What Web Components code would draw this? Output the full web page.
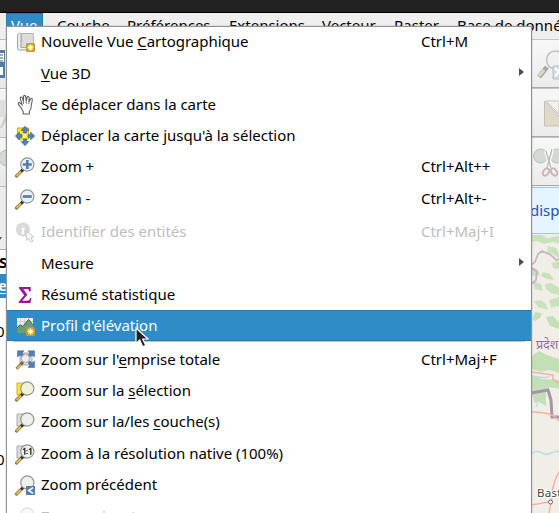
<!DOCTYPE html>
<html lang="fr"><head><meta charset="utf-8"><title>QGIS</title>
<style>
html,body{margin:0;width:559px;height:513px;overflow:hidden;background:#fff}
body{font:15px "Noto Sans",sans-serif;color:#000}
</style></head><body>
<qg-window>
 <menu-bar slot="bar"></menu-bar>
 <layer-panel slot="left"></layer-panel>
 <tool-stack slot="right"></tool-stack>
 <drop-menu slot="menu">
  <menu-row icon="newmap" key="Ctrl+M">Nouvelle Vue <u>C</u>artographique</menu-row>
  <menu-row gap="1" sub><u>V</u>ue 3D</menu-row>
  <menu-row icon="hand">Se déplacer dans la carte</menu-row>
  <menu-row icon="pan">Déplacer la carte jusqu'à la sélection</menu-row>
  <menu-row icon="zin" key="Ctrl+Alt++">Zoom +</menu-row>
  <menu-row gap="1" icon="zout" key="Ctrl+Alt+-">Zoom -</menu-row>
  <menu-row gap="2" icon="info" key="Ctrl+Maj+I" disabled>Identifier des entités</menu-row>
  <menu-row gap="1" sub>Mesure</menu-row>
  <menu-row icon="sigma">Résumé statistique</menu-row>
  <menu-row icon="profile" active>Profil d'élévation</menu-row>
  <menu-row gap="3" line icon="full" key="Ctrl+Maj+F">Zoom sur l'<u>e</u>mprise totale</menu-row>
  <menu-row icon="zsel">Zoom sur la <u>s</u>élection</menu-row>
  <menu-row icon="zlay">Zoom sur la/les <u>c</u>ouche(s)</menu-row>
  <menu-row gap="1" icon="znat">Zoom à la résolution native (100%)</menu-row>
  <menu-row icon="zprev">Zoom précédent</menu-row>
  <menu-row gap="1" icon="znext" disabled>Zoom suivant</menu-row>
 </drop-menu>
 <mouse-pointer slot="pointer"></mouse-pointer>
</qg-window>
<script>
const lens=(fill='#f0f2ee',inner='')=>`<path d="M8.4 12.2 1.5 19" stroke="#77705f" stroke-width="3.2" stroke-linecap="round"/><path d="M5.8 14.8 2 18.5" stroke="#e5bd4c" stroke-width="1.9" stroke-linecap="round"/><path d="m8.6 12-2.5 2.5" stroke="#333" stroke-width="2.8"/><circle cx="12.3" cy="7.5" r="6.6" fill="${fill}" stroke="#8f9496" stroke-width="1.2"/>${inner}`;
const badge='<rect x="11" y="11" width="9" height="9" rx="1.6" fill="#c6a110"/><path d="M15.5 12.3v6.4M12.5 15.5h6M13.4 13.4l4.2 4.2M17.6 13.4l-4.2 4.2" stroke="#fff5bd" stroke-width="1.3"/><circle cx="15.5" cy="15.5" r="1.2" fill="#fff"/>';
const ICONS={
newmap:`<path d="M6 1.5h12.5v15H6z" fill="#dcdcda" stroke="#b4b4b2"/><path d="M2.5 2.5Q4.3-.5 6 2.5v13h13v2.6H4.4q-1.9-.2-1.9-2z" fill="#ececea" stroke="#a4a4a4"/>${badge}`,
hand:`<path d="M5.2 12.8 3 9.9C2 8.5 3.5 7.4 4.8 8.6l1.8 1.7L4.8 4.1c-.5-1.7 1.5-2.2 2.1-.7L8 7.1V2.2C8 .5 10 .5 10.2 2.1l.6 4.800.8-4c.3-1.400 2.200-1.100 2.100.5l-.3 4 1.500-2.700c.8-1.300 2.200-.6 1.900.8l-1 5.200c0 3.900-1 5.100-2 6.100v2.700H7.700v-2.400z" fill="#fff" stroke="#606060" stroke-width="1.100" transform="matrix(1 0 0 1 .5 -.5)"/><path d="M8.500 6.500v2.300M11.300 6.500v2.300M13.900 7v2" stroke="#777"/>`,
pan:`<path d="M2.5 2h11v11h-11z" fill="#ffe72e" stroke="#c7ac13"/><g fill="#547fae" stroke="#385f8b" stroke-width=".6"><path d="M10 .3 14 4.5h-2.5V7h-3V4.5H6zM10 19.7l4-4.200h-2.500V13h-3v2.500H6zM.3 10l4.200-4v2.500H7v3H4.500V14zM19.700 10l-4.200-4v2.500H13v3h2.500V14z"/></g><path d="M8 8h4v4H8z" fill="#fff284"/>`,
zin:lens('#eef1f2','<path d="M12.3 3v9M7.8 7.5h9" stroke="#557fae" stroke-width="2.7"/>'),
zout:lens('#eef1f2','<path d="M7.8 7.5h9" stroke="#557fae" stroke-width="2.7"/>'),
info:`<circle cx="8" cy="7.5" r="7" fill="#d7d9db"/><path d="M8.8 3.2h.2M6.5 6.8h2l-1 4.5h1.8" stroke="#fff" stroke-width="2"/><path d="m11 9 .8 9.300 2.300-2 2 3.700 1.800-1-2-3.600 3.100-.5z" fill="#fff" stroke="#c2c4c6"/>`,
sigma:`<path d="M4 2h11.700v4.500h-1.500c-.3-2-.9-2.500-2.700-2.500H8.300l4 5.700-5 6h4.600c2 0 2.900-.8 3.300-2.700h1.100l-.8 5H3.700v-1.300l5.500-6.400L4 3.200z" fill="#9b159b"/>`,
profile:`<path d="M2 2h16v15H2z" fill="#e8eceb"/><path d="M5.5 2v12M9.5 2v12M13.5 2v12M2 5.5h16M2 9h16" stroke="#c0cdc9" stroke-width=".7"/><path d="M2 12 5 9l3 1.500L12 5l1.800-1.500L18 9v8H2z" fill="#6c9b80"/><path d="M2 12 5 9l3 1.500L12 5l1.800-1.500L18 9" stroke="#3d7056" fill="none"/>${badge}`,
full:`<path d="M5 3h12v12H5z" fill="#dadddd" stroke="#aaa"/><g fill="#547fae" stroke="#3d668f" stroke-width=".5"><path d="M2.500.8h6.500L7.200 3l1.800 2-2 2-2-2-2.500 2zM19.500.8H13L14.800 3 13 5l2 2 2-2 2.500 2zM19.500 17.500H13l1.800-2.300L13 13l2-2 2 2 2.500-2z"/></g><path d="m8.200 11.800-6.600 7" stroke="#706852" stroke-width="3"/><path d="m5.700 14.800-3.500 3.600" stroke="#e4bc4a" stroke-width="2"/><circle cx="10.500" cy="8.500" r="4" fill="#edf0ec" stroke="#aaa"/>`,
zsel:`<path d="M2 2h9v12H2z" fill="#ffe72e" stroke="#c8b224"/>${lens('#f3f0d8')}`,
zlay:`<path d="M2 2h9v12H2z" fill="#ddd" stroke="#aaa"/>${lens('#eef0e9')}`,
znat:`<path d="M2 2h9v12H2z" fill="#ddd" stroke="#aaa"/>${lens('#f0f1ef','<path d="m8 5.700 1.800-1v6M14 5.700l1.800-1v6M12 6.200v1M12 9v1" stroke="#333" stroke-width="1.400"/>')}`,
zprev:lens('#eef0e9','<path d="M11 11h9v9h-9z" fill="#547fae"/><path d="m18 12.600-4.400 2.900 4.400 2.900" stroke="#fff" stroke-width="1.500"/>'),
znext:lens('#eef0e9')
};
function el(name,css,html){customElements.define(name,class extends HTMLElement{constructor(){super();this.attachShadow({mode:'open'}).innerHTML=`<style>*{box-sizing:border-box}${css}</style>${html}`}})}

el('qg-window',`:host{display:grid;position:relative;width:559px;height:513px;grid-template-rows:13px 26px 474px;overflow:hidden}
.title{background:#222;border-bottom:1px solid #000}.work{display:grid;grid-template-columns:1fr 28px}
.over{position:absolute;left:6px;top:26px}.ptr{position:absolute;left:135px;top:327px}`,
`<div class="title"></div><slot name="bar"></slot><div class="work"><slot name="left"></slot><slot name="right"></slot></div><div class="over"><slot name="menu"></slot></div><div class="ptr"><slot name="pointer"></slot></div>`);

el('menu-bar',`:host{display:grid;grid-template-columns:51px 70px 102px 93px 72px 63px 110px;padding-left:6px;background:#efefef;line-height:25px;height:26px;white-space:nowrap;overflow:hidden}
.on{background:#308cc6;color:#fff;width:37px;border:1px solid #2a79ab;border-width:1px 1px 0;line-height:23px;padding-left:4px}`,
`<span class="on">Vue</span><span>Couche</span><span>Préférences</span><span>Extensions</span><span>Vecteur</span><span>Raster</span><span>Base de données</span>`);

el('layer-panel',`:host{display:flex;flex-direction:column;width:7px;overflow:hidden;background:#fff}
div{flex:none;overflow:hidden;white-space:nowrap}.t{height:49px;background:linear-gradient(#f6f6f6,#e8e8e8);border-top:1px solid #bbb}
.t svg{display:block}.dock{height:64px;background:#ececec;border-bottom:1px solid #aaa;border-top:1px solid #bbb}.s{height:24px;line-height:24px;font-weight:700}.e{height:24px;line-height:22px;background:#308cc6;color:#fff;text-decoration:underline;text-underline-offset:2px;font-weight:700}
.n{height:128px;line-height:66px}.n span,.s span,.e span{display:block;margin-left:-4px}.s span{margin-left:-1px}.e span{margin-left:-2px}`,
`<div class="t"><svg width="7" height="48"><path d="M0 10h5v28H0z" fill="#527da9"/><path d="M0 13h4v9H0z" fill="#fff"/><path d="M0 15h3M0 18h3M0 21h3" stroke="#555"/><path d="M0 27h3v8H0z" fill="#fff"/></svg></div>
<div class="t"><svg width="7" height="48"><path d="M0 11h5v17H0z" fill="#ddd"/><path d="M0 39 6 24v8L2 39z" fill="#d5cbc7"/></svg></div>
<div class="t"><svg width="7" height="48"><circle cx="7" cy="20" r="8" fill="#d5d9d5" stroke="#bbb"/></svg></div>
<div class="dock"><svg width="7" height="62"><path d="M-2 50h4l-2 3z" fill="#555"/></svg></div><div class="s"><span>S</span></div><div class="e"><span>e</span></div><div class="n"><span>0</span></div><div class="n"><span>0</span></div>`);

el('tool-stack',`:host{display:flex;flex-direction:column;width:28px;background:#efefef;overflow:hidden}
div{flex:none;height:49px;background:linear-gradient(#f7f7f7,#ececec);border-top:1px solid #c6c6c6;border-bottom:1px solid #aaa;overflow:hidden}svg{display:block}
p{flex:none;margin:1px 0 0;height:47px;line-height:44px;text-indent:-1px;background:#e6f4ff;border:1px solid #a5c4e5;border-width:1px 0;color:#2451b2;white-space:nowrap;overflow:hidden}`,
`<div><svg width="28" height="48" fill="none"><path d="m16 27-8 10" stroke="#aaa" stroke-width="5"/><path d="m13 30-5 6" stroke="#ddd8ca" stroke-width="3"/><circle cx="24.500" cy="20" r="9" fill="#f1f2ef" stroke="#c0c2c0" stroke-width="1.500"/><path d="M22 26h8v13h-8z" fill="#d5dce3" stroke="#b8c0c8"/><path d="m24 28 4 4-4 4" stroke="#fff" stroke-width="2"/></svg></div>
<div><svg width="28" height="48"><path d="M13.500 12v25H30V29z" fill="#ded9ca" stroke="#c4c0b3"/><path d="M15 12h13v13z" fill="#f1f1ef" stroke="#c5c5c2"/></svg></div>
<div><svg width="28" height="48" fill="none"><circle cx="9.500" cy="18" r="7" fill="#d5d9d6" stroke="#bbc0bd"/><circle cx="26" cy="18" r="7" fill="#d5d9d6" stroke="#bbc0bd"/><path d="m15 13 5 17M21 11l-5 19" stroke="#fff" stroke-width="4"/><path d="m15 13 5 17M21 11l-5 19" stroke="#bbb" stroke-width="1.500"/><ellipse cx="15" cy="34" rx="2.700" ry="4" stroke="#c9b4b5" stroke-width="2" transform="rotate(35 15 34)"/><ellipse cx="23" cy="34" rx="2.700" ry="4" stroke="#c9b4b5" stroke-width="2" transform="rotate(-35 23 34)"/></svg></div>
<p>disponible</p>
<svg width="28" height="279" viewBox="0 234 28 279" fill="none"><path d="M0 234h28v279H0z" fill="#f1eee8"/>
<g fill="#c9e2bc"><path d="M1 235h10l5 3 12-2v7l-7-1-8 2-7-3-5 1zM17 246l8 2 3 5v5l-6-4-6-1zM1 267l5 2 3 5-4 3-4-2zM12 272l7 2 4 6-7-1-6-3zM20 263l8-2v7l-5 1zM2 281l8 3 2 7-8-2zM14 284l6-1 8 5v7l-8-2-5-4zM3 301l7-1 5 4 2 6-10-3zM18 300l10-3v9l-8 2z"/></g>
<g fill="#c2dfb6"><path d="M4 312l7 1-2 5-5 3-3-2zM15 317l7-1 6 7v6l-9-3zM1 356l7-5 8 4 12 4v14l-10-3-9 2-8-3zM1 376l10 3 17 1v9l-10-2-3 5v14l-7-4-4 1-3-8z"/></g>
<path d="M0 265l4-3 3-8 4-3 9 4 5 5 3-1M1 268l5 4-1 8-4 4" stroke="#c8b5c9" stroke-width="1.800"/>
<path d="M0 393l17-3 3 10 1 17h7" stroke="#a694ac" stroke-width="3"/><path d="M0 372l15 2 7 1v4l6 4M0 412q16 0 23 4l5 5M28 472q-7 12-7 26l-3 15M0 505l18-3" stroke="#f4b29f" stroke-width="1.500"/><path d="M1 376q14 3 18 0M1 453q6-3 10 0t9 0 8-1M5 407l2-4M12 404v-6" stroke="#b9dce6" stroke-width="1.500"/><circle cx="19.500" cy="502" r="2" fill="#fff" stroke="#666"/>
<text x="5" y="349" fill="#8f6f9a" font-family="Noto Sans, sans-serif" font-size="12.500">प्रदेश</text><text x="6" y="497" fill="#444" stroke="#fff" stroke-width="2" paint-order="stroke" font-family="Noto Sans, sans-serif" font-size="11.500" letter-spacing=".3">Bastar</text></svg>`);

el('drop-menu',`:host{display:block;box-sizing:border-box;width:526px;height:490px;background:#fff;border:1px solid #929292;border-bottom:0;box-shadow:0 0 1px #888;overflow:hidden;letter-spacing:-.015px}`,`<slot></slot>`);

customElements.define('menu-row',class extends HTMLElement{
 connectedCallback(){
  const a=n=>this.getAttribute(n),has=n=>this.hasAttribute(n),first=!this.previousElementSibling;
  this.attachShadow({mode:'open'}).innerHTML=`<style>
  :host{display:block;padding-top:${a('gap')||0}px;color:${has('disabled')?'#bebebe':has('active')?'#fff':'#000'}}
  .r{box-sizing:border-box;display:grid;grid-template-columns:26px 380px 98px 8px;height:${first?30:31}px;margin:0 ${has('active')?'0':'1px'};padding-left:${has('active')?8:7}px;line-height:${first?29:31}px;${has('active')?'background:#308cc6;box-shadow:inset 0 1px #2a79ab,inset 0 -1px #2a79ab;':''}white-space:nowrap}
  .line{height:1px;margin:-3px 6px 2px;background:#bfc6ca}
  .i{display:block;width:20px;height:20px;margin-top:${first?5:6}px;overflow:visible;${has('disabled')&&a('icon')!='info'?'opacity:.3;':''}}
  .arrow{align-self:center;width:0;height:0;border:4.500px solid transparent;border-left:5px solid #505050;border-right:0;margin-top:-3px}
  ::slotted(u){text-underline-offset:2px;text-decoration-thickness:1px}
  </style>${has('line')?'<div class="line"></div>':''}<div class="r"><svg class="i" viewBox="0 0 20 20" fill="none">${ICONS[a('icon')]||''}</svg><span><slot></slot></span><span>${a('key')||''}</span>${has('sub')?'<i class="arrow"></i>':''}</div>`;
 }});
el('mouse-pointer',`:host{display:block}svg{display:block}`,`<svg width="14" height="22" viewBox="0 0 14 22"><path d="M1 1v15.500l3.700-3.400 3 6.600 3-1.400-3-6.300H13z" fill="#222" stroke="#fff" stroke-width="1.200"/></svg>`);
</script></body></html>
